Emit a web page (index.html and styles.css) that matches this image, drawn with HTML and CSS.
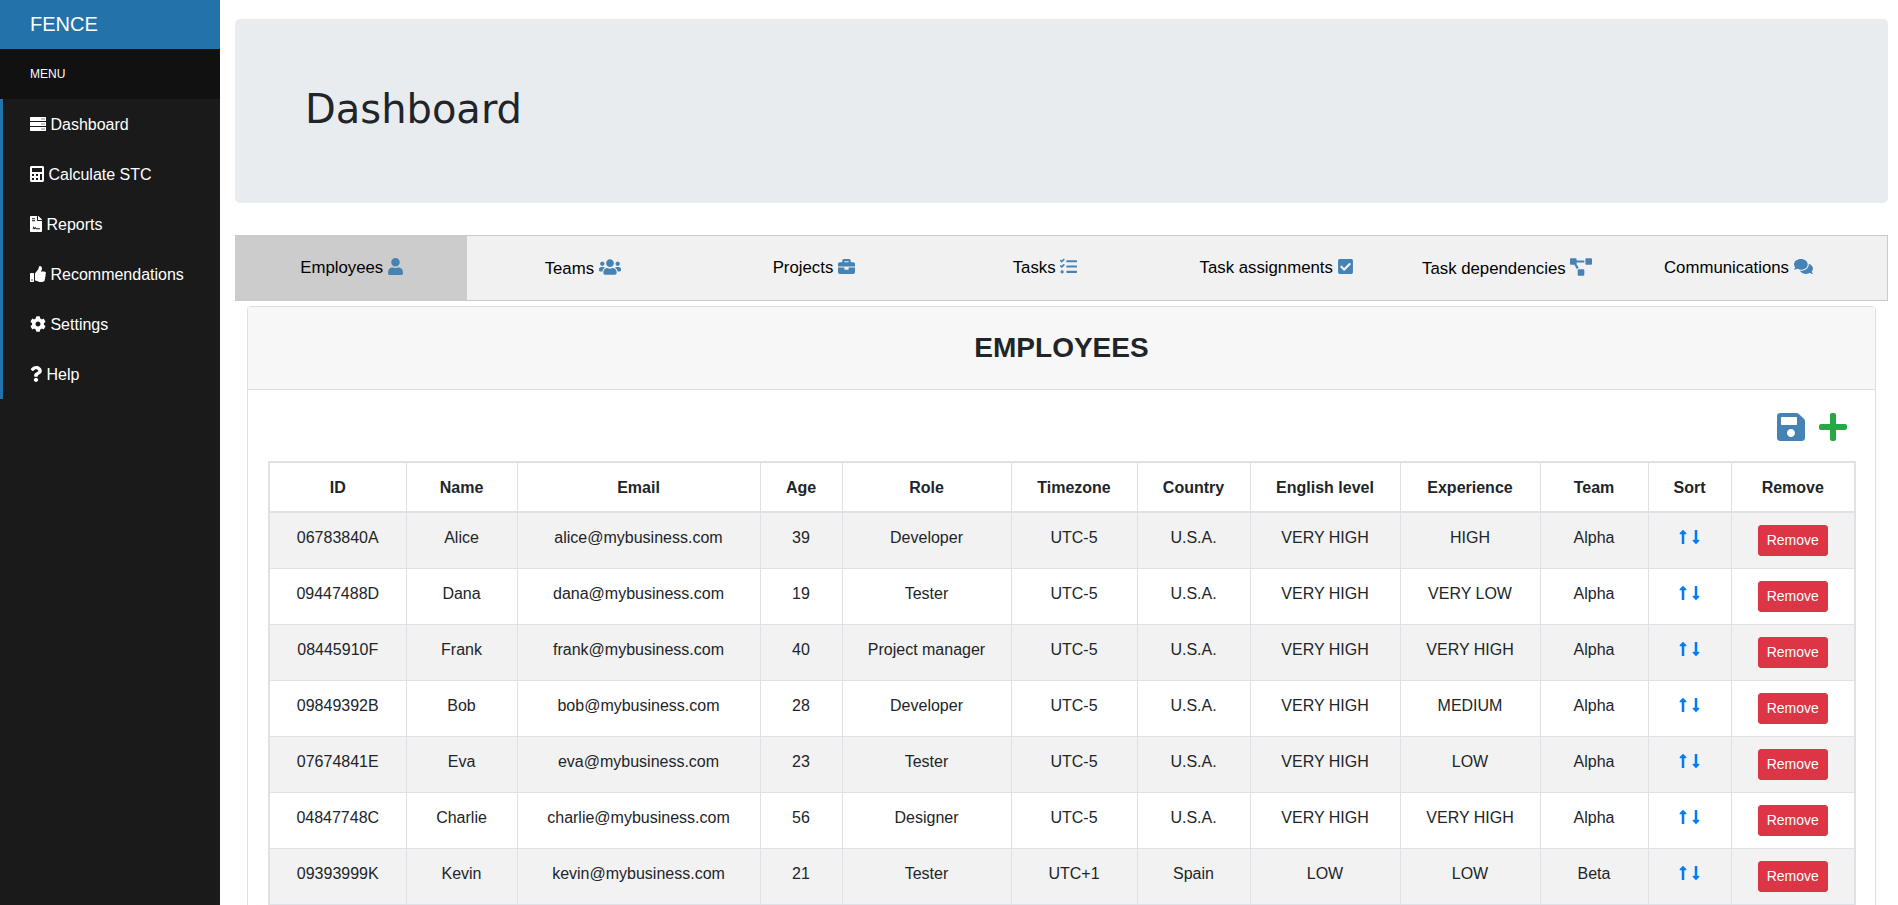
FILE: index.html
```html
<!DOCTYPE html>
<html lang="en">

<head>
    <meta charset="UTF-8">
    <meta name="viewport" content="width=device-width, initial-scale=1.0">
    <title>FENCE</title>
    <link rel="stylesheet" href="styles.css">
</head>

<body>
    <!-- Icon set -->
    <svg class="icon-defs" xmlns="http://www.w3.org/2000/svg">
        <symbol id="i-server" viewBox="0 0 512 512"><path fill-rule="evenodd" d="M0 48C0 31 13 32 32 32h448c19 0 32-1 32 16v96c0 17-13 16-32 16H32c-19 0-32 1-32-16zM368 80v32h32V80zm64 0v32h32V80zM0 208c0-17 13-16 32-16h448c19 0 32-1 32 16v96c0 17-13 16-32 16H32c-19 0-32 1-32-16zM368 240v32h32v-32zm64 0v32h32v-32zM0 368c0-17 13-16 32-16h448c19 0 32-1 32 16v96c0 17-13 16-32 16H32c-19 0-32 1-32-16zM368 400v32h32v-32zm64 0v32h32v-32z"/></symbol>
        <symbol id="i-calc" viewBox="0 0 448 512"><path fill-rule="evenodd" d="M48 0h352c26 0 48 22 48 48v416c0 26-22 48-48 48H48c-26 0-48-22-48-48V48C0 22 22 0 48 0zM64 64v128h320V64zm0 192v64h64v-64zm128 0v64h64v-64zm128 0v192h64V256zM64 384v64h64v-64zm128 0v64h64v-64z"/></symbol>
        <symbol id="i-file" viewBox="0 0 384 512"><path fill-rule="evenodd" d="M224 136V0H24C11 0 0 11 0 24v464c0 13 11 24 24 24h336c13 0 24-11 24-24V160H248c-13 0-24-11-24-24zM64 72h96v32H64zm0 64h96v32H64zm20 276l32-90 34 62 24-30 30 38h116v32H190l-22-26-26 32-22-40-12 32z"/><path d="M384 122v6H256V0h6c6 0 12 3 17 7l98 98c4 5 7 11 7 17z"/></symbol>
        <symbol id="i-thumb" viewBox="0 0 512 512"><path d="M104 224H24c-13.255 0-24 10.745-24 24v240c0 13.255 10.745 24 24 24h80c13.255 0 24-10.745 24-24V248c0-13.255-10.745-24-24-24zM64 472c-13.255 0-24-10.745-24-24s10.745-24 24-24 24 10.745 24 24-10.745 24-24 24zM384 81.452c0 42.416-25.97 66.208-33.277 94.548h101.723c33.397 0 59.397 27.746 59.553 58.098.084 17.938-7.546 37.249-19.439 49.197l-.11.11c9.836 23.337 8.237 56.037-9.308 79.469 8.681 25.895-.069 57.704-16.382 74.757 4.298 17.598 2.244 32.575-6.148 44.632C440.202 511.587 389.616 512 346.839 512l-2.845-.001c-48.287-.017-87.806-17.598-119.56-31.725-15.957-7.099-36.821-15.887-52.651-16.178-6.54-.12-11.783-5.457-11.783-11.998v-213.77c0-3.2 1.282-6.271 3.558-8.521 39.614-39.144 56.648-80.587 89.117-113.111 14.804-14.832 20.188-37.236 25.393-58.902C282.515 39.293 291.817 0 312 0c24 0 72 8 72 81.452z"/></symbol>
        <symbol id="i-cog" viewBox="0 0 512 512"><path d="M487.4 315.7l-42.6-24.6c4.3-23.2 4.3-47 0-70.2l42.6-24.6c4.9-2.8 7.1-8.6 5.5-14-11.1-35.6-30-67.8-54.7-94.6-3.8-4.1-10-5.1-14.8-2.3L380.8 110c-17.9-15.4-38.5-27.3-60.8-35.1V25.8c0-5.6-3.9-10.5-9.4-11.7-36.7-8.2-74.3-7.8-109.2 0-5.5 1.2-9.4 6.1-9.4 11.7V75c-22.2 7.9-42.8 19.8-60.8 35.1L88.7 85.5c-4.9-2.8-11-1.9-14.8 2.3-24.7 26.7-43.6 58.9-54.7 94.6-1.7 5.4.6 11.2 5.5 14L67.3 221c-4.3 23.2-4.3 47 0 70.2l-42.6 24.6c-4.9 2.8-7.1 8.6-5.5 14 11.1 35.6 30 67.8 54.7 94.6 3.8 4.1 10 5.1 14.8 2.3l42.6-24.6c17.9 15.4 38.5 27.3 60.8 35.1v49.2c0 5.6 3.9 10.5 9.4 11.7 36.7 8.2 74.3 7.8 109.2 0 5.5-1.2 9.4-6.1 9.4-11.7v-49.2c22.2-7.9 42.8-19.8 60.8-35.1l42.6 24.6c4.9 2.8 11 1.9 14.8-2.3 24.7-26.7 43.6-58.9 54.7-94.6 1.5-5.5-.7-11.3-5.6-14.1zM256 336c-44.1 0-80-35.9-80-80s35.9-80 80-80 80 35.9 80 80-35.9 80-80 80z"/></symbol>
        <symbol id="i-help" viewBox="0 0 384 512"><path d="M202.021 0C122.202 0 70.503 32.703 29.914 91.026c-7.363 10.58-5.093 25.086 5.178 32.874l43.138 32.709c10.373 7.865 25.132 6.026 33.253-4.148 25.049-31.381 43.63-49.449 82.757-49.449 30.764 0 68.816 19.799 68.816 49.631 0 22.552-18.617 34.134-48.993 51.164-35.423 19.86-82.299 44.576-82.299 106.405V320c0 13.255 10.745 24 24 24h72.471c13.255 0 24-10.745 24-24v-5.773c0-42.86 125.268-44.645 125.268-160.627C377.504 66.256 286.902 0 202.021 0zM192 373.459c-38.196 0-69.271 31.075-69.271 69.271 0 38.195 31.075 69.27 69.271 69.27s69.271-31.075 69.271-69.271-31.075-69.27-69.271-69.27z"/></symbol>
        <symbol id="i-user" viewBox="0 0 448 512"><path d="M224 256c70.7 0 128-57.3 128-128S294.7 0 224 0 96 57.3 96 128s57.3 128 128 128zm89.6 32h-16.7c-22.2 10.2-46.9 16-72.9 16s-50.6-5.8-72.9-16h-16.7C60.2 288 0 348.2 0 422.4V464c0 26.5 21.5 48 48 48h352c26.5 0 48-21.5 48-48v-41.6c0-74.2-60.2-134.4-134.4-134.4z"/></symbol>
        <symbol id="i-users" viewBox="0 0 640 512"><path d="M96 224c35.3 0 64-28.7 64-64s-28.7-64-64-64-64 28.7-64 64 28.7 64 64 64zm448 0c35.3 0 64-28.7 64-64s-28.7-64-64-64-64 28.7-64 64 28.7 64 64 64zm32 32h-64c-17.6 0-33.5 7.1-45.1 18.6 40.3 22.1 68.9 62 75.1 109.4h66c17.7 0 32-14.3 32-32v-32c0-35.3-28.7-64-64-64zm-256 0c61.9 0 112-50.1 112-112S381.9 32 320 32 208 82.1 208 144s50.1 112 112 112zm76.8 32h-8.3c-20.8 10-43.9 16-68.5 16s-47.6-6-68.5-16h-8.3C179.6 288 128 339.6 128 403.2V432c0 26.5 21.5 48 48 48h288c26.5 0 48-21.5 48-48v-28.8c0-63.6-51.6-115.2-115.2-115.2zm-223.7-13.4C161.5 263.1 145.6 256 128 256H64c-35.3 0-64 28.7-64 64v32c0 17.7 14.3 32 32 32h65.9c6.3-47.4 34.9-87.3 75.2-109.4z"/></symbol>
        <symbol id="i-case" viewBox="0 0 512 512"><path d="M320 336c0 8.84-7.16 16-16 16h-96c-8.84 0-16-7.16-16-16v-48H0v144c0 25.6 22.4 48 48 48h416c25.6 0 48-22.4 48-48V288H320v48zm144-208h-80V80c0-25.6-22.4-48-48-48H176c-25.6 0-48 22.4-48 48v48H48c-25.6 0-48 22.4-48 48v80h512v-80c0-25.6-22.4-48-48-48zm-144 0H192V96h128v32z"/></symbol>
        <symbol id="i-tasks" viewBox="0 0 512 512"><path d="M139 38l-17-17c-5-5-12-5-17 0L51 75 31 56c-5-5-12-5-17 0L-3 73c-5 5-5 12 0 17l46 46c5 5 13 5 18 0l21-21 57-60c5-5 5-12 0-17zm0 160l-17-17c-5-5-12-5-17 0l-54 54-20-19c-5-5-12-5-17 0L-3 233c-5 5-5 12 0 17l46 46c5 5 13 5 18 0l21-21 57-60c5-5 5-12 0-17zM64 368c-26 0-48 21-48 48s22 48 48 48 48-21 48-48-22-48-48-48zM496 384H208c-9 0-16 7-16 16v32c0 9 7 16 16 16h288c9 0 16-7 16-16v-32c0-9-7-16-16-16zm0-320H208c-9 0-16 7-16 16v32c0 9 7 16 16 16h288c9 0 16-7 16-16V80c0-9-7-16-16-16zm0 160H208c-9 0-16 7-16 16v32c0 9 7 16 16 16h288c9 0 16-7 16-16v-32c0-9-7-16-16-16z"/></symbol>
        <symbol id="i-check" viewBox="0 0 448 512"><path d="M400 480H48c-26.51 0-48-21.49-48-48V80c0-26.51 21.49-48 48-48h352c26.51 0 48 21.49 48 48v352c0 26.51-21.49 48-48 48zm-204.686-98.059l184-184c6.248-6.248 6.248-16.379 0-22.627l-22.627-22.627c-6.248-6.248-16.379-6.249-22.628 0L184 302.745l-70.059-70.059c-6.248-6.248-16.379-6.248-22.628 0l-22.627 22.627c-6.248 6.248-6.248 16.379 0 22.627l104 104c6.249 6.25 16.379 6.25 22.628.001z"/></symbol>
        <symbol id="i-diagram" viewBox="0 0 640 512"><path d="M384 320H256c-17.67 0-32 14.33-32 32v128c0 17.67 14.33 32 32 32h128c17.67 0 32-14.33 32-32V352c0-17.67-14.33-32-32-32zM192 32c0-17.67-14.33-32-32-32H32C14.33 0 0 14.33 0 32v128c0 17.67 14.33 32 32 32h95.72l73.16 128.04C211.98 300.98 232.4 288 256 288h.28L192 175.51V128h224V64H192V32zM608 0H480c-17.67 0-32 14.33-32 32v128c0 17.67 14.33 32 32 32h128c17.67 0 32-14.33 32-32V32c0-17.67-14.33-32-32-32z"/></symbol>
        <symbol id="i-comments" viewBox="0 0 576 512"><path d="M416 192c0-88.4-93.1-160-208-160S0 103.6 0 192c0 34.3 14.1 65.9 38 92-13.4 30.2-35.5 54.2-35.8 54.5-2.2 2.3-2.8 5.7-1.5 8.7S4.8 352 8 352c36.6 0 66.9-12.3 88.7-25 32.2 15.7 70.3 25 111.3 25 114.9 0 208-71.6 208-160zm122 220c23.9-26 38-57.7 38-92 0-66.9-53.5-124.2-129.3-148.1.9 6.6 1.3 13.3 1.3 20.1 0 105.9-107.7 192-240 192-10.8 0-21.3-.8-31.7-1.9C207.8 439.6 281.8 480 368 480c41 0 79.1-9.2 111.3-25 21.8 12.7 52.1 25 88.7 25 3.2 0 6.1-1.9 7.3-4.8 1.3-2.9.7-6.3-1.5-8.7-.3-.3-22.4-24.2-35.8-54.5z"/></symbol>
        <symbol id="i-save" viewBox="0 0 448 512"><path d="M433.941 129.941l-83.882-83.882A48 48 0 0 0 316.118 32H48C21.49 32 0 53.49 0 80v352c0 26.51 21.49 48 48 48h352c26.51 0 48-21.49 48-48V163.882a48 48 0 0 0-14.059-33.941zM224 416c-35.346 0-64-28.654-64-64 0-35.346 28.654-64 64-64s64 28.654 64 64c0 35.346-28.654 64-64 64zm96-304.52V212c0 6.627-5.373 12-12 12H76c-6.627 0-12-5.373-12-12V108c0-6.627 5.373-12 12-12h228.52c3.183 0 6.235 1.264 8.485 3.515l3.48 3.48A11.996 11.996 0 0 1 320 111.48z"/></symbol>
        <symbol id="i-plus" viewBox="0 0 448 512"><path d="M416 208H272V64c0-17.67-14.33-32-32-32h-32c-17.67 0-32 14.33-32 32v144H32c-17.67 0-32 14.33-32 32v32c0 17.67 14.33 32 32 32h144v144c0 17.67 14.33 32 32 32h32c17.67 0 32-14.33 32-32V304h144c17.67 0 32-14.33 32-32v-32c0-17.67-14.33-32-32-32z"/></symbol>
        <symbol id="i-up" viewBox="0 0 256 512"><path d="M88 166.059V468c0 6.627 5.373 12 12 12h56c6.627 0 12-5.373 12-12V166.059h46.059c21.382 0 32.09-25.851 16.971-40.971l-86.059-86.059c-9.373-9.373-24.569-9.373-33.941 0l-86.059 86.059c-15.119 15.119-4.411 40.971 16.971 40.971H88z"/></symbol>
        <symbol id="i-down" viewBox="0 0 256 512"><path d="M168 345.941V44c0-6.627-5.373-12-12-12h-56c-6.627 0-12 5.373-12 12v301.941H41.941c-21.382 0-32.09 25.851-16.971 40.971l86.059 86.059c9.373 9.373 24.569 9.373 33.941 0l86.059-86.059c15.119-15.119 4.411-40.971-16.971-40.971H168z"/></symbol>
    </svg>

    <div class="wrapper">
        <!-- Sidebar -->
        <nav class="sidebar">
            <div class="brand">FENCE</div>
            <div class="menu-title">MENU</div>
            <ul class="menu">
                <li><svg class="ico w-server"><use href="#i-server"/></svg> Dashboard</li>
                <li><svg class="ico w-calc"><use href="#i-calc"/></svg> Calculate STC</li>
                <li><svg class="ico w-file"><use href="#i-file"/></svg> Reports</li>
                <li><svg class="ico w-thumb"><use href="#i-thumb"/></svg> Recommendations</li>
                <li><svg class="ico w-thumb"><use href="#i-cog"/></svg> Settings</li>
                <li><svg class="ico w-file"><use href="#i-help"/></svg> Help</li>
            </ul>
        </nav>

        <main class="content">
            <div class="jumbotron">
                <h1>Dashboard</h1>
            </div>

            <!-- Tabs -->
            <div class="tabs">
                <button class="tab active">Employees <svg class="tab-ico t-user"><use href="#i-user"/></svg></button>
                <button class="tab">Teams <svg class="tab-ico t-users"><use href="#i-users"/></svg></button>
                <button class="tab">Projects <svg class="tab-ico t-square"><use href="#i-case"/></svg></button>
                <button class="tab">Tasks <svg class="tab-ico t-square"><use href="#i-tasks"/></svg></button>
                <button class="tab">Task assignments <svg class="tab-ico t-user"><use href="#i-check"/></svg></button>
                <button class="tab">Task dependencies <svg class="tab-ico t-users"><use href="#i-diagram"/></svg></button>
                <button class="tab">Communications <svg class="tab-ico t-comments"><use href="#i-comments"/></svg></button>
            </div>

            <div class="card">
                <div class="card-header">
                    <h2>EMPLOYEES</h2>
                </div>
                <div class="card-body">
                    <div class="actions">
                        <svg class="action-ico save-ico"><use href="#i-save"/></svg>
                        <svg class="action-ico plus-ico"><use href="#i-plus"/></svg>
                    </div>
                    <table class="employees">
                        <colgroup>
                            <col class="c-id"><col class="c-name"><col class="c-email"><col class="c-age">
                            <col class="c-role"><col class="c-tz"><col class="c-country"><col class="c-eng">
                            <col class="c-exp"><col class="c-team"><col class="c-sort"><col class="c-remove">
                        </colgroup>
                        <thead>
                            <tr>
                                <th>ID</th><th>Name</th><th>Email</th><th>Age</th><th>Role</th><th>Timezone</th>
                                <th>Country</th><th>English level</th><th>Experience</th><th>Team</th><th>Sort</th><th>Remove</th>
                            </tr>
                        </thead>
                        <tbody id="rows"></tbody>
                    </table>
                </div>
            </div>
        </main>
    </div>

    <script>
        // Employee rows
        const employees = [
            ['06783840A', 'Alice', 'alice@mybusiness.com', 39, 'Developer', 'UTC-5', 'U.S.A.', 'VERY HIGH', 'HIGH', 'Alpha'],
            ['09447488D', 'Dana', 'dana@mybusiness.com', 19, 'Tester', 'UTC-5', 'U.S.A.', 'VERY HIGH', 'VERY LOW', 'Alpha'],
            ['08445910F', 'Frank', 'frank@mybusiness.com', 40, 'Project manager', 'UTC-5', 'U.S.A.', 'VERY HIGH', 'VERY HIGH', 'Alpha'],
            ['09849392B', 'Bob', 'bob@mybusiness.com', 28, 'Developer', 'UTC-5', 'U.S.A.', 'VERY HIGH', 'MEDIUM', 'Alpha'],
            ['07674841E', 'Eva', 'eva@mybusiness.com', 23, 'Tester', 'UTC-5', 'U.S.A.', 'VERY HIGH', 'LOW', 'Alpha'],
            ['04847748C', 'Charlie', 'charlie@mybusiness.com', 56, 'Designer', 'UTC-5', 'U.S.A.', 'VERY HIGH', 'VERY HIGH', 'Alpha'],
            ['09393999K', 'Kevin', 'kevin@mybusiness.com', 21, 'Tester', 'UTC+1', 'Spain', 'LOW', 'LOW', 'Beta']
        ];

        const rows = document.getElementById('rows');
        employees.forEach(function (emp) {
            const tr = document.createElement('tr');
            let html = '';
            emp.forEach(function (value) {
                html += '<td>' + value + '</td>';
            });
            html += '<td><svg class="arrow"><use href="#i-up"/></svg><svg class="arrow"><use href="#i-down"/></svg></td>';
            html += '<td><button class="btn-remove">Remove</button></td>';
            tr.innerHTML = html;
            rows.appendChild(tr);
        });
    </script>
</body>

</html>
```

FILE: styles.css
```css
html, body {
    height: 100%;
    overflow: hidden;
}

body {
    margin: 0;
    font-family: "Liberation Sans", Arial, sans-serif;
    font-size: 16px;
    line-height: 1.5;
    color: #212529;
    background-color: #fff;
}

.icon-defs {
    display: none;
}

.wrapper {
    display: flex;
    height: 100vh;
}

/* Sidebar */
.sidebar {
    flex: 0 0 220px;
    background-color: #1a1a1a;
    color: #fff;
}

.brand {
    height: 49px;
    line-height: 48px;
    padding-left: 30px;
    font-size: 20px;
    background-color: #2372a9;
}

.menu-title {
    height: 50px;
    line-height: 50px;
    padding-left: 30px;
    font-size: 12px;
    background-color: #111;
}

.menu {
    list-style: none;
    margin: 0;
    padding: 0;
}

.menu li {
    height: 50px;
    line-height: 52px;
    padding-left: 27px;
    font-size: 16px;
    border-left: 3px solid #2372a9;
}

.ico {
    display: inline-block;
    height: 16px;
    fill: currentColor;
    vertical-align: -2px;
}

.w-server { width: 16px; }
.w-calc { width: 14px; }
.w-file { width: 12px; }
.w-thumb { width: 16px; }

/* Main area */
.content {
    flex: 1;
    min-width: 0;
    padding: 19px 10px 0 15px;
}

.jumbotron {
    height: 184px;
    box-sizing: border-box;
    padding: 0 0 4px 70px;
    display: flex;
    align-items: center;
    background-color: #e9ecef;
    border-radius: 5px;
    margin-bottom: 32px;
}

.jumbotron h1 {
    margin: 0;
    font-family: "DejaVu Sans", Verdana, sans-serif;
    font-size: 40px;
    font-weight: 400;
    line-height: 1.2;
}

/* Tabs */
.tabs {
    display: flex;
    height: 66px;
    box-sizing: border-box;
    background-color: #f1f1f1;
    border: 1px solid #ccc;
}

.tab {
    width: 14%;
    padding: 0;
    border: none;
    background: none;
    font-family: inherit;
    font-size: 16.8px;
    color: #000;
    cursor: pointer;
}

.tab.active {
    background-color: #ccc;
}

.tab-ico {
    display: inline-block;
    height: 17px;
    fill: #4682b4;
    vertical-align: -2px;
}

.t-user { width: 15px; }
.t-square { width: 17px; }
.t-users { width: 22px; height: 18px; }
.t-comments { width: 19px; }

/* Card */
.card {
    margin: 5px 12px 0;
    background-color: #fff;
    border: 1px solid #dfdfdf;
    border-radius: 4px;
}

.card-header {
    height: 82px;
    display: flex;
    align-items: center;
    justify-content: center;
    background-color: #f7f7f7;
    border-bottom: 1px solid #dfdfdf;
}

.card-header h2 {
    margin: 0;
    font-size: 28px;
    font-weight: 700;
    line-height: 1.2;
}

.card-body {
    padding: 21px 21px 20px 20px;
}

.actions {
    display: flex;
    justify-content: flex-end;
    gap: 14px;
    padding-right: 7px;
    margin-bottom: 18px;
}

.action-ico {
    width: 28px;
    height: 32px;
}

.save-ico {
    fill: #4682b4;
}

.plus-ico {
    fill: #28a745;
}

/* Table */
.employees {
    width: 100%;
    table-layout: fixed;
    border-collapse: collapse;
    border: 2px solid #dee2e6;
    text-align: center;
}

.employees th,
.employees td {
    padding: 13px 12px 11px;
    border: 1px solid #dee2e6;
    vertical-align: top;
}

.employees th {
    font-weight: 700;
    border-bottom-width: 2px;
}

.employees tbody tr:nth-child(odd) {
    background-color: #f2f2f2;
}

.c-id { width: 137px; }
.c-name { width: 111px; }
.c-email { width: 243px; }
.c-age { width: 82px; }
.c-role { width: 169px; }
.c-tz { width: 126px; }
.c-country { width: 113px; }
.c-eng { width: 150px; }
.c-exp { width: 140px; }
.c-team { width: 108px; }
.c-sort { width: 83px; }
.c-remove { width: 124px; }

.arrow {
    display: inline-block;
    width: 8px;
    height: 16px;
    margin: 0 2.5px;
    fill: #007bff;
    vertical-align: -2px;
}

.btn-remove {
    margin: -1px 0 1px;
    padding: 4px 8px;
    font-family: inherit;
    font-size: 14px;
    line-height: 1.5;
    color: #fff;
    background-color: #dc3545;
    border: 1px solid #dc3545;
    border-radius: 3px;
    cursor: pointer;
}
```
